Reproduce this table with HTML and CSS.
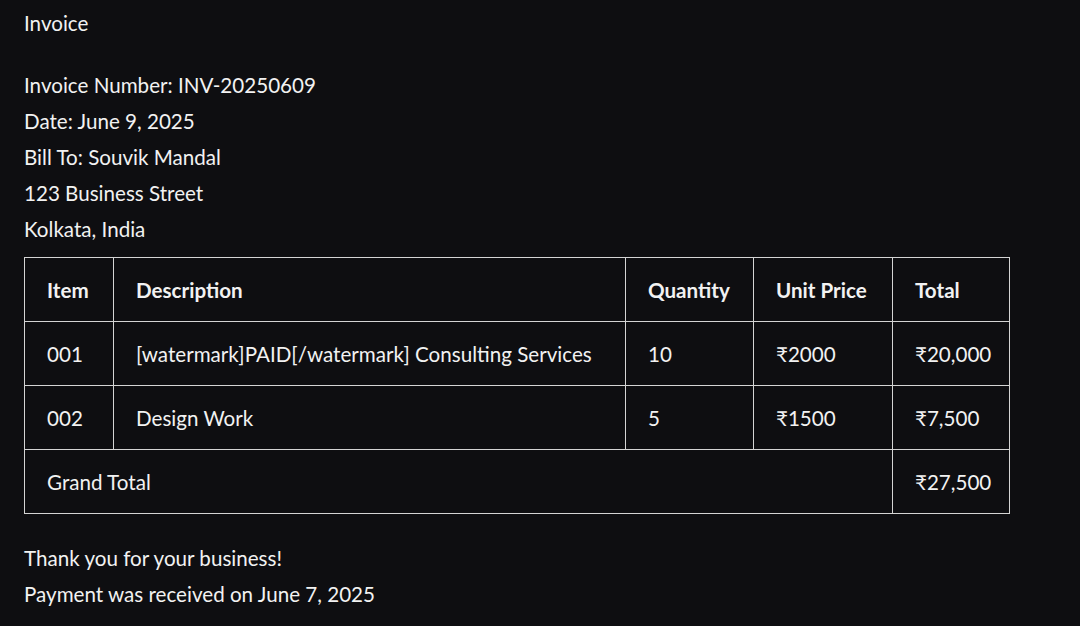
FILE: index.html
```html
<!DOCTYPE html>
<html lang="en">
<head>
<meta charset="utf-8">
<title>Invoice</title>
<link rel="stylesheet" href="styles.css">
</head>
<body>
<main class="page">
  <p class="title">Invoice</p>
  <section class="details">
    <p>Invoice Number: INV-20250609</p>
    <p>Date: June 9, 2025</p>
    <p>Bill To: Souvik Mandal</p>
    <p>123 Business Street</p>
    <p>Kolkata, India</p>
  </section>
  <table class="items">
    <colgroup>
      <col class="c-item">
      <col class="c-desc">
      <col class="c-qty">
      <col class="c-unit">
      <col class="c-total">
    </colgroup>
    <thead>
      <tr><th>Item</th><th>Description</th><th>Quantity</th><th>Unit Price</th><th>Total</th></tr>
    </thead>
    <tbody>
      <tr><td>001</td><td>[watermark]PAID[/watermark] Consulting Services</td><td>10</td><td>₹2000</td><td>₹20,000</td></tr>
      <tr><td>002</td><td>Design Work</td><td>5</td><td>₹1500</td><td>₹7,500</td></tr>
      <tr><td colspan="4">Grand Total</td><td>₹27,500</td></tr>
    </tbody>
  </table>
  <section class="footer">
    <p>Thank you for your business!</p>
    <p>Payment was received on June 7, 2025</p>
  </section>
</main>
</body>
</html>
```
FILE: styles.css
```css
html, body {
  margin: 0;
  padding: 0;
  background: #0e0e11;
}
body {
  color: #f2f2f2;
  font-family: "Lato", "Noto Sans", "DejaVu Sans", sans-serif;
  font-size: 20.6px;
  line-height: 36px;
}
.page {
  padding: 5px 24px 0 24px;
  display: flex;
  flex-direction: column;
  align-items: flex-start;
}
p {
  margin: 0;
}
.details {
  margin-top: 26px;
}
.items {
  margin-top: 10px;
  border-collapse: collapse;
  table-layout: fixed;
  width: 985px;
}
.c-item { width: 89px; }
.c-desc { width: 512px; }
.c-qty { width: 128px; }
.c-unit { width: 139px; }
.c-total { width: 117px; }
.items th, .items td {
  border: 1px solid #d4d4d4;
  height: 63px;
  padding: 0 0 0 22px;
  text-align: left;
  vertical-align: middle;
  white-space: nowrap;
}
.items th {
  font-weight: 700;
}
.items td {
  font-weight: 400;
}
.footer {
  margin-top: 26px;
}
```
